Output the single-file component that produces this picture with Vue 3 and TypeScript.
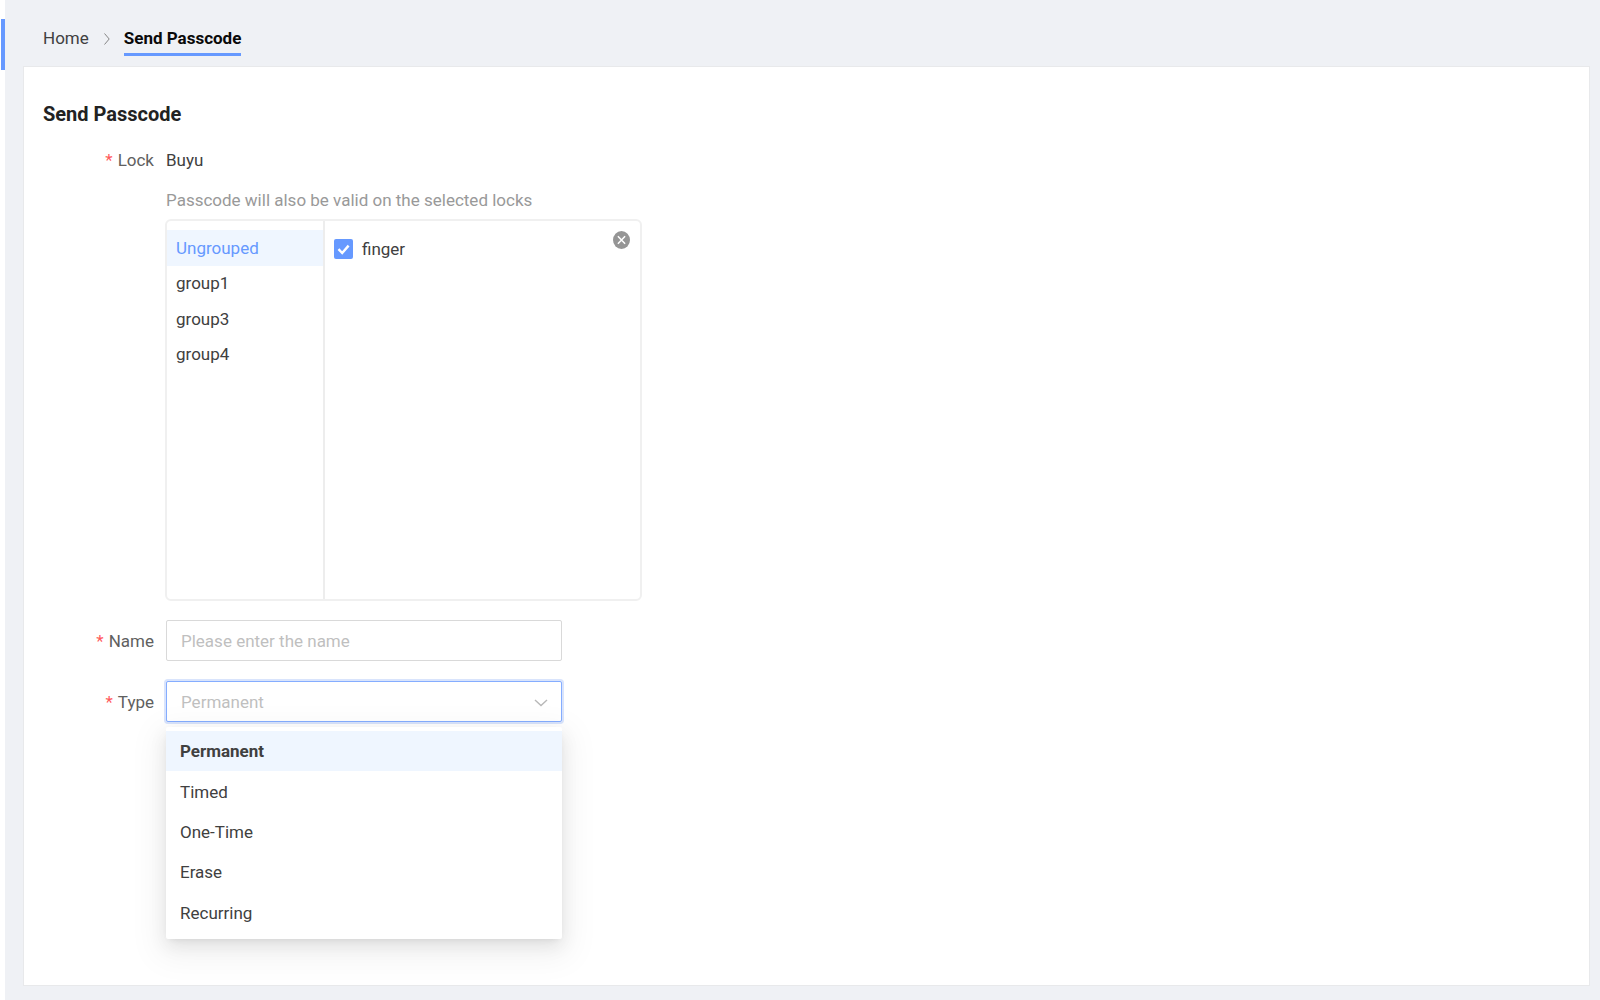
<script setup lang="ts">
import { ref } from 'vue'

const groups: string[] = ['Ungrouped', 'group1', 'group3', 'group4']
const types: string[] = ['Permanent', 'Timed', 'One-Time', 'Erase', 'Recurring']

const activeGroup = ref('Ungrouped')
const fingerChecked = ref(true)
const name = ref('')
const type = ref('Permanent')
const menuOpen = ref(true)

function choose(option: string): void {
  type.value = option
  menuOpen.value = false
}
</script>

<template>
  <div class="page">
    <aside class="rail"><span class="rail-mark"></span></aside>
    <div class="content">
      <nav class="breadcrumb" aria-label="Breadcrumb">
        <a href="#" class="crumb">Home</a>
        <svg class="crumb-sep" viewBox="0 0 8 14" aria-hidden="true">
          <path d="M1.5 1.5 6.2 7 1.5 12.5" />
        </svg>
        <a href="#" class="crumb current" aria-current="page">Send Passcode</a>
      </nav>

      <main class="card">
        <h1 class="title">Send Passcode</h1>
        <form class="form" @submit.prevent>
          <div class="row lock-row">
            <span class="label"><i class="star">*</i>Lock</span>
            <span class="value">Buyu</span>
          </div>

          <div class="locks">
            <p class="hint">Passcode will also be valid on the selected locks</p>
            <div class="picker">
              <div class="groups">
                <div class="group-list">
                  <button
                    v-for="group in groups"
                    :key="group"
                    type="button"
                    class="group"
                    :class="{ active: group === activeGroup }"
                    @click="activeGroup = group"
                  >{{ group }}</button>
                </div>
              </div>
              <div class="members">
                <label class="check">
                  <input v-model="fingerChecked" type="checkbox" />
                  <span class="box">
                    <svg viewBox="0 0 19 20" aria-hidden="true"><path d="M4.5 10.2 8.2 14 14.6 6.6" /></svg>
                  </span>
                  <span>finger</span>
                </label>
                <button type="button" class="close" aria-label="Close">
                  <svg viewBox="0 0 17 18" aria-hidden="true">
                    <ellipse cx="8.5" cy="9" rx="8.5" ry="9" />
                    <path d="M4.9 5.2 12.1 12.8M12.1 5.2 4.9 12.8" />
                  </svg>
                </button>
              </div>
            </div>
          </div>

          <div class="row field-row">
            <label class="label" for="name"><i class="star">*</i>Name</label>
            <div class="control">
              <input id="name" v-model="name" class="field" type="text" placeholder="Please enter the name" />
            </div>
          </div>

          <div class="row field-row">
            <label class="label" for="type"><i class="star">*</i>Type</label>
            <div class="control">
              <select id="type" v-model="type" class="field select" @mousedown.prevent="menuOpen = !menuOpen">
                <option v-for="option in types" :key="option" :value="option">{{ option }}</option>
              </select>
              <svg class="arrow" viewBox="0 0 14 8" aria-hidden="true"><path d="M1 1 7 6.6 13 1" /></svg>
              <div v-if="menuOpen" class="menu" role="listbox" aria-label="Type">
                <button
                  v-for="option in types"
                  :key="option"
                  type="button"
                  role="option"
                  class="option"
                  :class="{ selected: option === type }"
                  :aria-selected="option === type"
                  @click="choose(option)"
                >{{ option }}</button>
              </div>
            </div>
          </div>
        </form>
      </main>
    </div>
  </div>
</template>

<style>
body {
  margin: 0;
  background: #eff1f5;
}
</style>

<style scoped>
.page,
.page * {
  box-sizing: border-box;
}
.page {
  display: flex;
  min-height: 100vh;
  color: #404040;
  font: 17px/24px Roboto, "Liberation Sans", sans-serif;
}
button,
input,
select {
  margin: 0;
  color: inherit;
  font: inherit;
}
button {
  border: 0;
  background: none;
  text-align: left;
  cursor: pointer;
}
.rail {
  display: flex;
  justify-content: flex-end;
  flex: none;
  width: 5px;
  padding-top: 19px;
  background: #fff;
}
.rail-mark {
  width: 4px;
  height: 51px;
  background: #6699ff;
}
.content {
  display: flex;
  flex: 1;
  flex-direction: column;
  padding: 0 10px 14px 18px;
  background: #eff1f5;
}
.breadcrumb {
  display: flex;
  align-items: flex-start;
  height: 66px;
  padding: 26px 20px 0;
}
.crumb {
  height: 30px;
  color: #404040;
  text-decoration: none;
}
.crumb.current {
  border-bottom: 3px solid #6699ff;
  color: #0a0a0a;
  font-weight: 700;
}
.crumb-sep {
  width: 8px;
  height: 14px;
  margin: 6px 13px 0 14px;
  fill: none;
  stroke: #858585;
  stroke-width: 1;
}
.card {
  flex: 1;
  padding: 33px 19px;
  border: 1px solid #e8e9eb;
  background: #fff;
}
.title {
  margin: 0 0 20px;
  color: #222;
  font-size: 20px;
  font-weight: 700;
  line-height: 28px;
}
.row {
  display: flex;
}
.label {
  flex: none;
  width: 123px;
  padding-right: 12px;
  color: #606060;
  text-align: right;
}
.star {
  margin-right: 5px;
  color: #ff5a5c;
  font-style: normal;
}
.lock-row {
  margin-bottom: 16px;
}
.locks {
  margin-left: 122px;
}
.hint {
  margin: 0 0 7px 1px;
  color: #999;
}
.picker {
  display: flex;
  width: 477px;
  height: 382px;
  margin-bottom: 19px;
  border: 2px solid #f0f0f0;
  border-radius: 6px;
}
.groups {
  flex: none;
  width: 158px;
  padding-top: 9px;
  border-right: 2px solid #ededed;
}
.group-list {
  display: flex;
  flex-direction: column;
  height: 142px;
}
.group {
  flex: 1;
  width: 100%;
  padding: 0 9px;
}
.group.active {
  background: #eff6ff;
  color: #6699ff;
}
.members {
  display: flex;
  flex: 1;
  justify-content: space-between;
  align-items: flex-start;
  padding: 10px 10px 0 9px;
}
.check {
  display: flex;
  gap: 9px;
  align-items: center;
  padding-top: 6px;
  cursor: pointer;
}
.check input {
  position: absolute;
  opacity: 0;
}
.box {
  width: 19px;
  height: 20px;
  border: 1px solid #d9d9d9;
  border-radius: 2px;
}
.box svg {
  display: none;
  width: 19px;
  height: 20px;
  fill: none;
  stroke: #fff;
  stroke-width: 2.4;
}
input:checked + .box {
  border: 0;
  background: #6699ff;
}
input:checked + .box svg {
  display: block;
}
.close {
  padding: 0;
}
.close svg {
  display: block;
  width: 17px;
  height: 18px;
  fill: #959595;
  stroke: none;
}
.close path {
  stroke: #fff;
  stroke-width: 1.5;
}
.field-row {
  align-items: center;
  margin-bottom: 20px;
}
.control {
  position: relative;
  width: 396px;
}
.field {
  display: block;
  width: 100%;
  height: 41px;
  padding: 0 14px;
  border: 1px solid #d9d9d9;
  border-radius: 2px;
  outline: 0;
  background: #fff;
}
.field::placeholder {
  color: #bfbfbf;
  opacity: 1;
}
.select {
  border-color: #85adff;
  box-shadow: 0 0 0 2px #d9e4fc;
  color: #bfbfbf;
  appearance: none;
}
.select option {
  color: #404040;
}
.arrow {
  position: absolute;
  top: 18px;
  right: 14px;
  width: 14px;
  height: 8px;
  fill: none;
  stroke: #b8b8b8;
  stroke-width: 1.4;
  pointer-events: none;
}
.menu {
  position: absolute;
  top: 46px;
  left: 0;
  display: flex;
  flex-direction: column;
  width: 100%;
  height: 212px;
  padding: 4px 0 6px;
  border-radius: 2px;
  background: #fff;
  box-shadow: 0 3px 7px -4px rgba(0, 0, 0, 0.12), 0 7px 18px rgba(0, 0, 0, 0.08), 0 10px 32px 9px rgba(0, 0, 0, 0.05);
}
.option {
  flex: 1;
  width: 100%;
  padding: 0 14px;
}
.option.selected {
  background: #eff6ff;
  font-weight: 700;
}
</style>
